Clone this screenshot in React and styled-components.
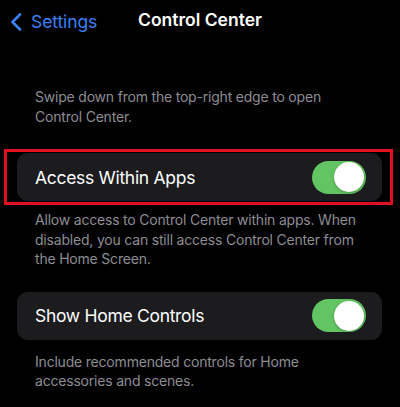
import React from "react";
import styled, { createGlobalStyle } from "styled-components";

const Global = createGlobalStyle`
  html, body { margin: 0; padding: 0; background: #000; }
  body { font-family: Inter, "Liberation Sans", sans-serif; -webkit-font-smoothing: antialiased; }
`;

const Page = styled.div`
  width: 400px;
  height: 407px;
  background: #000;
  display: flex;
  flex-direction: column;
  overflow: hidden;
`;

const NavBar = styled.div`
  height: 40px;
  position: relative;
  display: flex;
  align-items: center;
  justify-content: center;
`;

const Back = styled.div`
  position: absolute;
  left: 10px;
  top: 11px;
  display: flex;
  align-items: center;
  gap: 9px;
  color: #3b82f6;
  font-size: 17.5px;
  letter-spacing: -0.1px;
`;

const Title = styled.div`
  color: #fff;
  font-size: 17.5px;
  font-weight: 600;
  margin-top: -1px;
`;

const Footnote = styled.p`
  margin: ${(p) => p.$top}px 0 0 35px;
  width: 325px;
  color: #8d8d93;
  font-size: 14px;
  letter-spacing: -0.2px;
  line-height: 19.5px;
`;

const Highlight = styled.div`
  margin: 23px 7px 0 4px;
  border: 3px solid #e0101e;
  padding: 1px 8px 1px 10px;
`;

const Card = styled.div`
  height: 48px;
  margin: ${(p) => p.$top || 0}px ${(p) => (p.$inset ? 18 : 0)}px 0 ${(p) => (p.$inset ? 17 : 0)}px;
  background: #1c1c1e;
  border-radius: 11px;
  display: flex;
  align-items: center;
  justify-content: space-between;
  padding: 0 16px 0 18px;
`;

const Label = styled.span`
  color: #fff;
  font-size: 17.5px;
  letter-spacing: -0.3px;
`;

const Toggle = styled.div`
  width: 54px;
  height: 33px;
  border-radius: 17px;
  background: #62c462;
  position: relative;
  &::after {
    content: "";
    position: absolute;
    right: 2px;
    top: 1.5px;
    width: 30px;
    height: 30px;
    border-radius: 50%;
    background: #fff;
    box-shadow: 0 1px 3px rgba(0,0,0,0.25);
  }
`;

export default function App() {
  return (
    <Page>
      <Global />
      <NavBar>
        <Back>
          <svg width="12" height="18" viewBox="0 0 12 18">
            <path d="M10 1.5 L2.5 9 L10 16.5" fill="none" stroke="#3b82f6" strokeWidth="2.6" strokeLinecap="round" strokeLinejoin="round" />
          </svg>
          <span>Settings</span>
        </Back>
        <Title>Control Center</Title>
      </NavBar>
      <Footnote $top={47}>Swipe down from the top-right edge to open Control Center.</Footnote>
      <Highlight>
        <Card>
          <Label>Access Within Apps</Label>
          <Toggle />
        </Card>
      </Highlight>
      <Footnote $top={5}>Allow access to Control Center within apps. When disabled, you can still access Control Center from the Home Screen.</Footnote>
      <Card $inset $top={23}>
        <Label>Show Home Controls</Label>
        <Toggle />
      </Card>
      <Footnote $top={12}>Include recommended controls for Home accessories and scenes.</Footnote>
    </Page>
  );
}
